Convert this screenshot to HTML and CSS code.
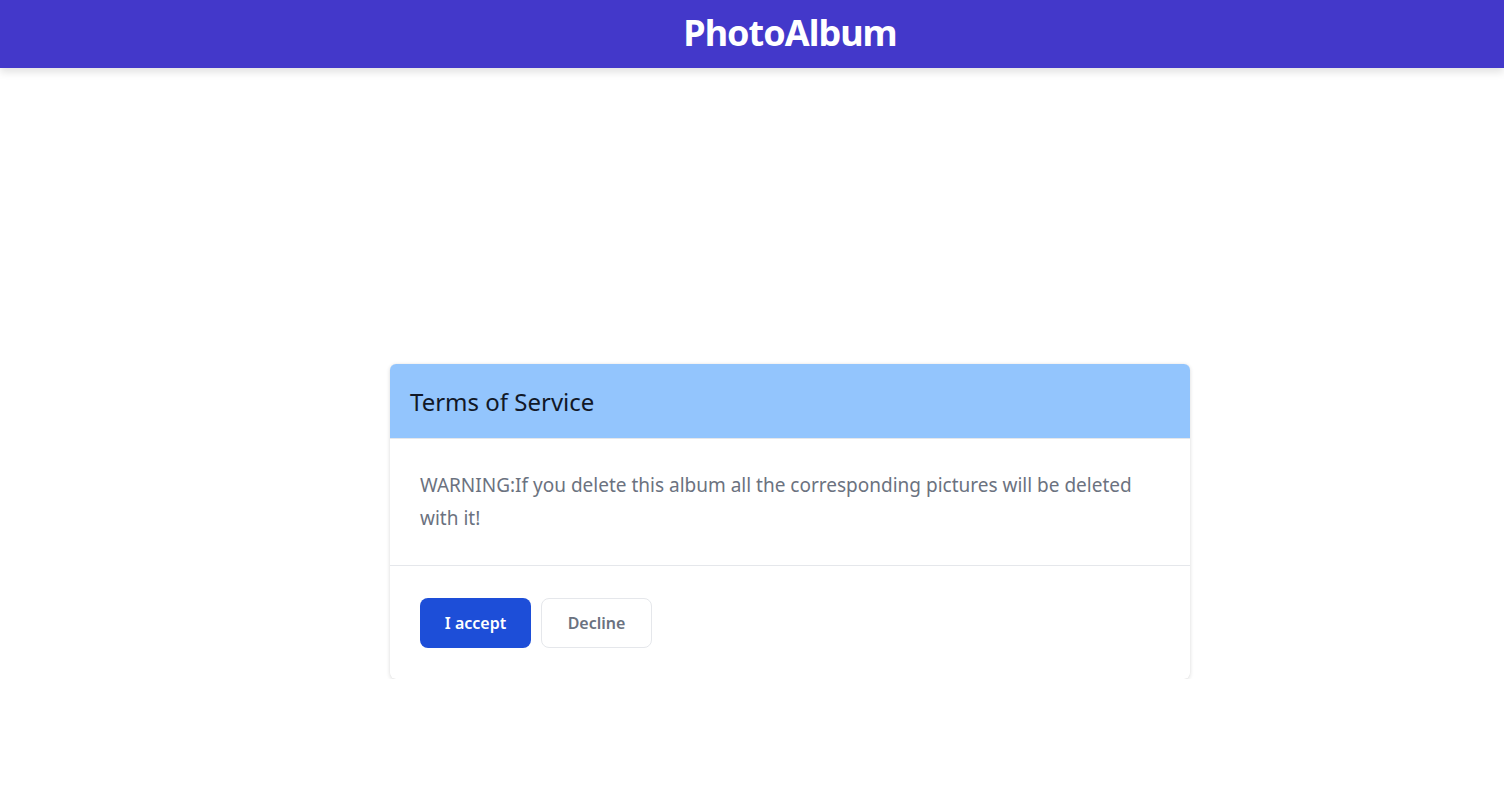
FILE: index.html
```html
<!DOCTYPE html>
<html lang="en">
<head>
<meta charset="utf-8">
<title>PhotoAlbum</title>
<link rel="stylesheet" href="styles.css">
</head>
<body>
<header class="topbar">
  <h1 class="brand">PhotoAlbum</h1>
</header>
<main class="page">
  <section class="card">
    <div class="card-head">
      <h2 class="card-title">Terms of Service</h2>
    </div>
    <div class="card-body">
      <p class="warning">WARNING:If you delete this album all the corresponding pictures will be deleted with it!</p>
    </div>
    <div class="card-foot">
      <button class="btn btn-primary" type="button">I accept</button>
      <button class="btn btn-ghost" type="button">Decline</button>
    </div>
  </section>
</main>
</body>
</html>
```
FILE: styles.css
```css
* { box-sizing: border-box; }
html, body { margin: 0; padding: 0; }
body {
  font-family: "Segoe UI", "Noto Sans", "Open Sans", sans-serif;
  background: #ffffff;
  color: #111827;
}
.topbar {
  height: 68px;
  background: #4338ca;
  display: flex;
  align-items: center;
  justify-content: center;
  padding-left: 76px;
  box-shadow: 0 4px 8px rgba(0,0,0,0.12);
}
.brand {
  margin: 0;
  color: #ffffff;
  font-size: 36px;
  font-weight: 700;
  line-height: 1;
  letter-spacing: -1px;
  transform: translateY(-1px);
}
.page {
  display: flex;
  justify-content: center;
  padding-top: 296px;
  padding-left: 76px;
}
.card {
  width: 800px;
  background: #fff;
  border-radius: 6px;
  box-shadow: 0 1px 4px rgba(0,0,0,0.14), 0 0 1px rgba(0,0,0,0.08);
  overflow: hidden;
}
.card-head {
  height: 75px;
  background: #93c5fd;
  display: flex;
  align-items: center;
  padding: 0 20px;
  border-bottom: 1px solid #e5e7eb;
}
.card-title {
  margin: 0;
  font-size: 24px;
  font-weight: 400;
  color: #111827;
}
.card-body {
  padding: 30px 30px;
  border-bottom: 1px solid #e5e7eb;
}
.warning {
  margin: 0;
  font-size: 19px;
  line-height: 33px;
  color: #6b7280;
}
.card-foot {
  display: flex;
  gap: 10px;
  padding: 32px 30px 31px;
}
.btn {
  width: 111px;
  height: 50px;
  border-radius: 8px;
  font-family: inherit;
  font-size: 16px;
  font-weight: 600;
  cursor: pointer;
}
.btn-primary {
  background: #1d4ed8;
  color: #fff;
  border: none;
}
.btn-ghost {
  background: #fff;
  color: #6b7280;
  border: 1px solid #e5e7eb;
}
```
